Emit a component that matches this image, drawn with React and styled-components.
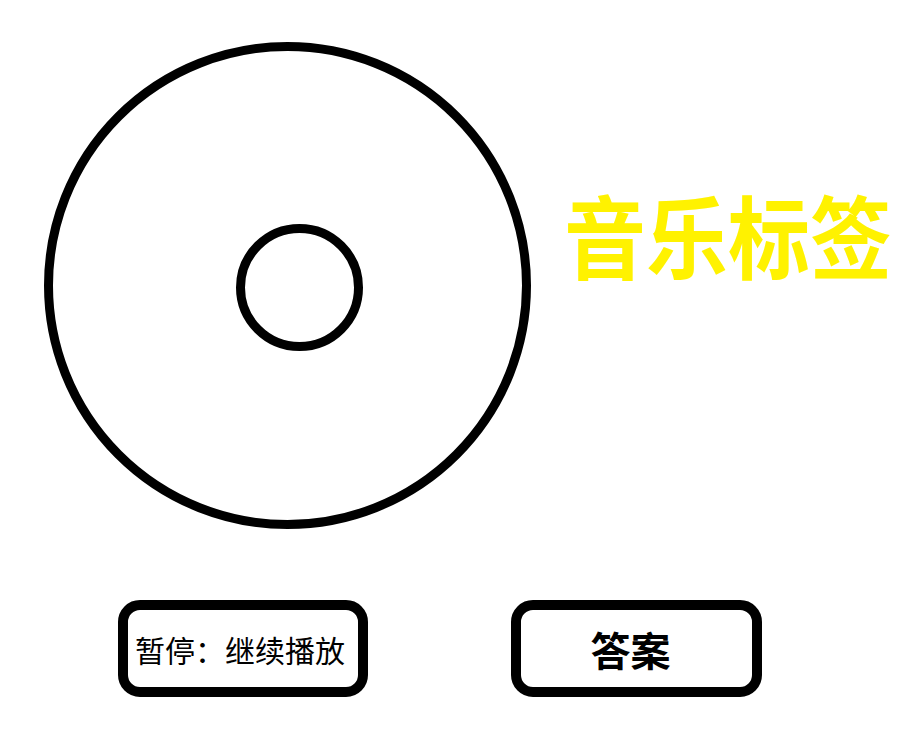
import React from 'react';
import styled, { createGlobalStyle } from 'styled-components';

const GlobalStyle = createGlobalStyle`
    html, body {
        margin: 0;
        padding: 0;
        background: #ffffff;
        font-family: "Noto Sans CJK SC", "Noto Sans", sans-serif;
    }
`;

const Page = styled.div`
    width: 900px;
    height: 750px;
    padding: 42px 0 0 44px;
    box-sizing: border-box;
    display: flex;
    flex-direction: column;
`;

const Top = styled.div`
    display: flex;
    align-items: center;
`;

const Disc = styled.div`
    width: 487px;
    height: 487px;
    box-sizing: border-box;
    border: 9px solid #000;
    border-radius: 50%;
    display: flex;
    align-items: center;
    justify-content: center;
    flex-shrink: 0;
`;

const Hole = styled.div`
    width: 127px;
    height: 127px;
    box-sizing: border-box;
    border: 9px solid #000;
    border-radius: 50%;
    margin: 4px 0 0 24px;
`;

const Title = styled.h1`
    margin: 0 0 104px 33px;
    font-size: 82px;
    font-weight: 700;
    line-height: 1;
    color: #fff200;
    white-space: nowrap;
    transform: scaleY(1.1);
`;

const Controls = styled.div`
    display: flex;
    gap: 143px;
    margin: 71px 0 0 74px;
`;

const Button = styled.button`
    width: ${(p) => p.$w || 250}px;
    height: 97px;
    box-sizing: border-box;
    border: 10px solid #000;
    border-radius: 22px;
    background: #fff;
    color: #000;
    padding: 0 ${(p) => p.$shift || 0}px 0 0;
    font-family: "Noto Sans CJK SC", sans-serif;
    font-size: ${(p) => p.$size}px;
    font-weight: ${(p) => (p.$bold ? 700 : 400)};
    display: flex;
    align-items: center;
    justify-content: center;
    cursor: pointer;
`;

export default function App() {
    return (
        <>
            <GlobalStyle />
            <Page>
                <Top>
                    <Disc>
                        <Hole />
                    </Disc>
                    <Title>音乐标签</Title>
                </Top>
                <Controls>
                    <Button $size={30} $shift={6}>暂停：继续播放</Button>
                    <Button $w={251} $size={40} $shift={12} $bold>答案</Button>
                </Controls>
            </Page>
        </>
    );
}
